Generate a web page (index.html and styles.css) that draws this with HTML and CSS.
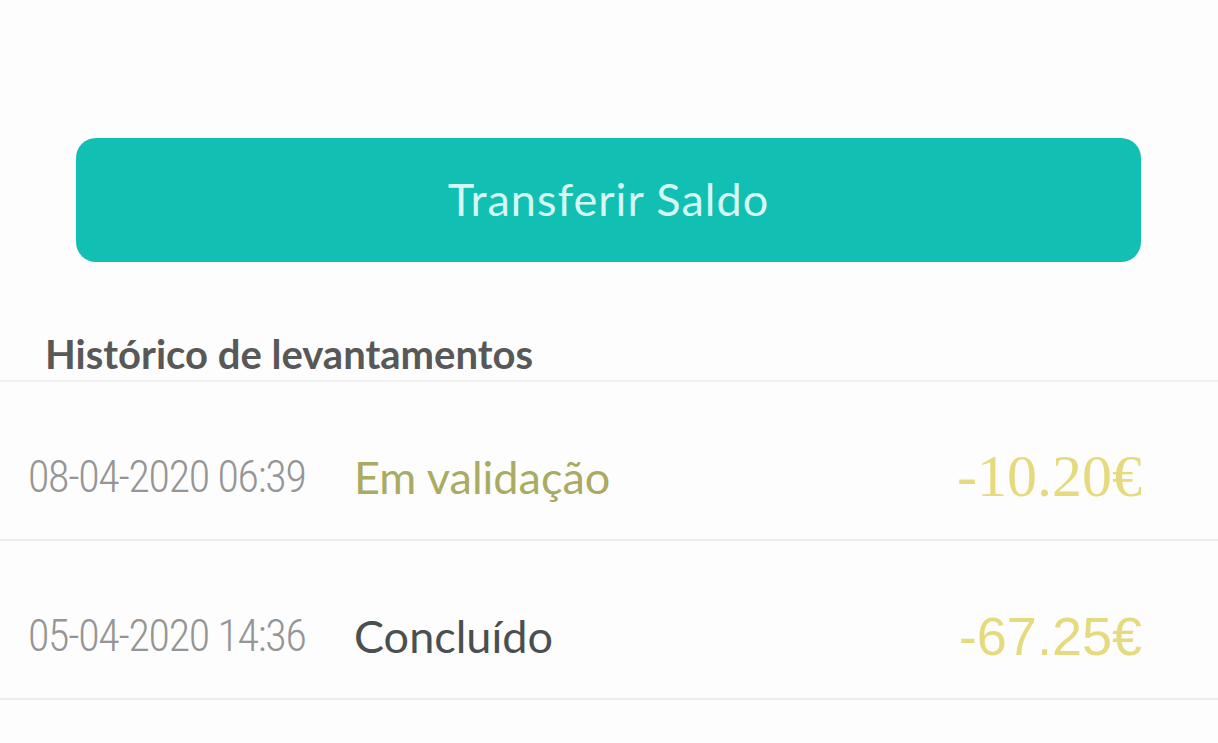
FILE: index.html
```html
<!DOCTYPE html>
<html lang="pt">
<head>
<meta charset="utf-8">
<link rel="stylesheet" href="styles.css">
</head>
<body>
<div class="page">
  <div class="top"></div>
  <div class="btn-wrap">
    <button class="btn">Transferir Saldo</button>
  </div>
  <h2 class="title">Histórico de levantamentos</h2>
  <ul class="list">
    <li class="row">
      <span class="date">08-04-2020 06:39</span>
      <span class="status pending">Em validação</span>
      <span class="amount serif">-10.20€</span>
    </li>
    <li class="row">
      <span class="date">05-04-2020 14:36</span>
      <span class="status done">Concluído</span>
      <span class="amount">-67.25€</span>
    </li>
  </ul>
</div>
</body>
</html>
```
FILE: styles.css
```css
html, body {
  margin: 0;
  padding: 0;
  background: #fdfdfd;
}
.page {
  width: 1218px;
  height: 743px;
  overflow: hidden;
  font-family: Lato, "Open Sans", sans-serif;
}
.top {
  height: 138px;
}
.btn-wrap {
  padding: 0 77px 0 76px;
}
.btn {
  display: block;
  width: 100%;
  height: 124px;
  border: none;
  border-radius: 20px;
  background: #12bfb3;
  color: #d6f7f1;
  font-family: Lato, sans-serif;
  font-size: 45px;
  letter-spacing: 1px;
  padding: 0 0 2px 0;
}
.title {
  margin: 0;
  padding: 68px 0 0 45px;
  height: 50px;
  font-size: 40px;
  line-height: 48px;
  font-weight: 700;
  color: #585858;
  border-bottom: 2px solid #f0f0f0;
}
.list {
  list-style: none;
  margin: 0;
  padding: 0;
}
.row {
  display: flex;
  align-items: center;
  height: 125px;
  padding: 32px 76px 0 28px;
  border-bottom: 2px solid #eeeeee;
}
.date {
  font-family: "Liberation Sans Narrow", "Roboto Condensed", "DejaVu Sans Condensed", sans-serif;
  font-stretch: condensed;
  font-weight: 300;
  font-size: 44px;
  letter-spacing: -1.3px;
  color: #959595;
  width: 326px;
}
.status {
  font-family: Lato, sans-serif;
  font-size: 45px;
}
.pending {
  color: #a9ab62;
}
.done {
  color: #4a4f4f;
}
.amount {
  margin-left: auto;
  font-family: "Liberation Sans", sans-serif;
  font-size: 54px;
  color: #e6da7e;
}
.amount.serif {
  font-family: "Liberation Serif", serif;
  font-size: 60px;
}
```
